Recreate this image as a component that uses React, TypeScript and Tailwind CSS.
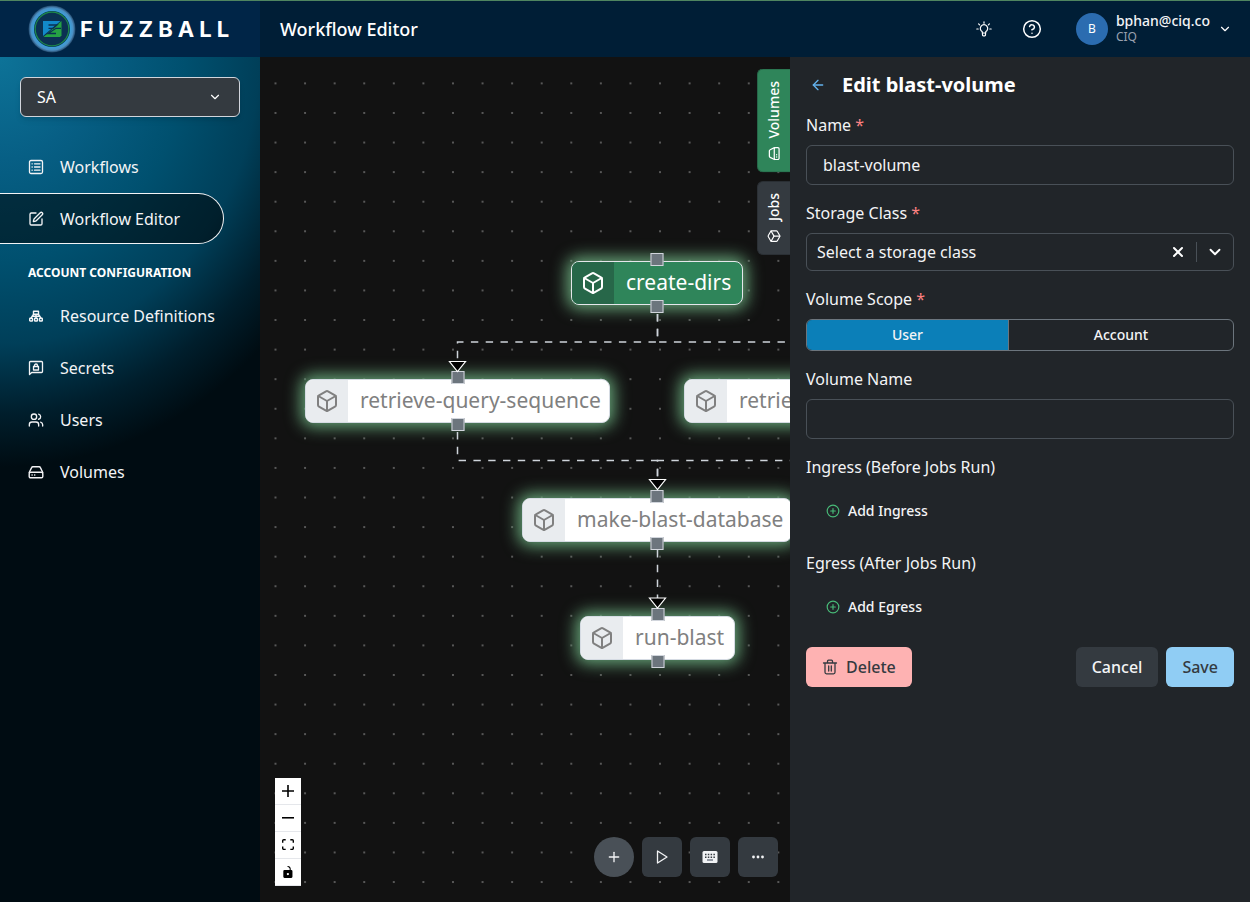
import clsx from 'clsx'
import {
  ArrowLeft,
  Box,
  ChevronDown,
  CircleHelp,
  CirclePlus,
  Play,
  Plus,
  SquarePen,
  Users,
  X,
} from 'lucide-react'
import { useState, type ReactNode, type SVGProps } from 'react'

function Outline({ children, ...props }: SVGProps<SVGSVGElement>) {
  return (
    <svg
      viewBox="0 0 16 16"
      width="16"
      height="16"
      fill="none"
      stroke="currentColor"
      strokeLinecap="round"
      strokeLinejoin="round"
      aria-hidden="true"
      {...props}
    >
      {children}
    </svg>
  )
}

function ListIcon() {
  return (
    <Outline strokeWidth="1.3">
      <rect x="1.5" y="1.5" width="13" height="13" rx="1.5" />
      <path d="M6.5 4.8h5.5M6.5 8h5.5M6.5 11.2h5.5M4 4.8h.3M4 8h.3M4 11.2h.3" />
    </Outline>
  )
}

function ClusterIcon() {
  return (
    <Outline strokeWidth="1.4">
      <rect x="5.5" y="3.2" width="5" height="3" />
      <path d="M5.500 6.400 3.200 9.800M10.500 6.400l2.300 3.400M8 6.400v3.400M4 8.200h8" />
      <rect x="1.700" y="10.200" width="2.800" height="2.800" rx=".6" />
      <rect x="6.600" y="10.200" width="2.800" height="2.800" rx=".6" />
      <rect x="11.500" y="10.200" width="2.800" height="2.800" rx=".6" />
    </Outline>
  )
}

function SecretIcon() {
  return (
    <Outline strokeWidth="1.3">
      <path d="M1.5 14.5v-12a1 1 0 0 1 1-1h11a1 1 0 0 1 1 1v9a1 1 0 0 1-1 1h-9.800z" />
      <rect x="5.500" y="6.500" width="5" height="3.500" />
      <path d="M6.500 6.500v-1a1.500 1.500 0 0 1 3 0v1" />
    </Outline>
  )
}

function DriveIcon(props: SVGProps<SVGSVGElement>) {
  return (
    <Outline strokeWidth="1.4" {...props}>
      <path d="M1.200 8.500 3.600 3.600a1.500 1.500 0 0 1 1.300-.9h6.200a1.500 1.500 0 0 1 1.300.9l2.400 4.900" />
      <rect x="1.200" y="8.300" width="13.600" height="5.500" rx="1.400" />
      <path d="M4 11h.2M6.600 11h.2" />
    </Outline>
  )
}

function BulbIcon() {
  return (
    <Outline strokeWidth="1.2">
      <path d="M6.300 12v-1.300a3.700 3.700 0 1 1 3.400 0V12zM6.500 12v2a.8.8 0 0 0 .8.8h1.400a.8.8 0 0 0 .8-.8v-2M8 .8v1.400M2.600 2.800l1 1M13.400 2.800l-1 1M.8 8h1.400M13.800 8h1.400" />
    </Outline>
  )
}

function TrashIcon() {
  return (
    <Outline strokeWidth="1.3">
      <path d="M1.500 4h13M5.500 4V2.200a1 1 0 0 1 1-1h3a1 1 0 0 1 1 1V4M3 4v9.300a1.500 1.500 0 0 0 1.500 1.500h7a1.500 1.500 0 0 0 1.500-1.500V4M6.700 7v5M9.300 7v5" />
    </Outline>
  )
}

function KeyboardIcon() {
  return (
    <svg viewBox="0 0 16 14" width="16" height="14" aria-hidden="true">
      <rect x=".5" y="1" width="15" height="12" rx="1.500" fill="#f1f3f5" />
      <path
        d="M3 4.500h10M3 7.200h10"
        stroke="#343a40"
        strokeWidth="1.400"
        strokeDasharray="1.500 1.300"
      />
      <path d="M5 10h6" stroke="#6b7280" strokeWidth="1.400" />
    </svg>
  )
}

function LogoMark() {
  return (
    <svg viewBox="0 0 48 48" width="48" height="48" aria-hidden="true">
      <defs>
        <radialGradient id="halo">
          <stop offset=".76" stopColor="#3ba2dc" />
          <stop offset=".9" stopColor="#4a8fc4" />
          <stop offset="1" stopColor="#5a87ae" stopOpacity=".35" />
        </radialGradient>
      </defs>
      <circle cx="24" cy="24" r="23.500" fill="url(#halo)" />
      <circle cx="24" cy="24" r="18" fill="#0b3152" />
      <circle cx="24" cy="24" r="16.800" fill="none" stroke="#1d8a4a" strokeWidth="1.200" />
      <path d="M15 16h17.500L15 31z" fill="#1289c9" />
      <path d="M33.500 16v14.500L32 32H15.500z" fill="#25a244" />
      <path d="M20.500 20h8.500l-4 3.300h-4.500M33 23.300h-5L20 28.500h8" stroke="#0b3152" strokeWidth="1.300" fill="none" />
    </svg>
  )
}

function NavItem({
  icon,
  label,
  active = false,
}: {
  icon: ReactNode
  label: string
  active?: boolean
}) {
  return (
    <a
      href="#"
      aria-current={active ? 'page' : undefined}
      className={clsx(
        'mr-9 flex h-[51px] items-center gap-4 pl-7 text-base text-gray-100',
        active && 'rounded-r-full border border-l-0 border-gray-100 bg-black/50',
      )}
    >
      {icon}
      {label}
    </a>
  )
}

function Sidebar() {
  return (
    <aside className="flex w-[260px] shrink-0 flex-col bg-[#000c12] bg-[radial-gradient(370px_410px_at_0_0,#0d7398_0%,#075f85_25%,#00506f_50%,#003f59_70%,#001e2c_87%,#000c12_100%)] pt-5">
      <div className="mx-5 grid items-center">
        <select
          aria-label="Account"
          className="col-start-1 row-start-1 h-10 appearance-none rounded-md border border-gray-300 bg-[#343a40] px-4 text-base text-white shadow-md"
        >
          <option>SA</option>
        </select>
        <ChevronDown
          size={14}
          className="pointer-events-none col-start-1 row-start-1 mr-[18px] justify-self-end text-white"
        />
      </div>
      <nav className="mt-6 flex flex-col gap-px">
        <NavItem icon={<ListIcon />} label="Workflows" />
        <NavItem icon={<SquarePen size={16} />} label="Workflow Editor" active />
        <h2 className="mb-1 pt-4 pl-7 text-xs leading-6 font-bold text-white">
          ACCOUNT CONFIGURATION
        </h2>
        <NavItem icon={<ClusterIcon />} label="Resource Definitions" />
        <NavItem icon={<SecretIcon />} label="Secrets" />
        <NavItem icon={<Users size={16} />} label="Users" />
        <NavItem icon={<DriveIcon />} label="Volumes" />
      </nav>
    </aside>
  )
}

function Header() {
  return (
    <header className="flex h-[57px] shrink-0 border-t border-[#4f8560] bg-[#001e36] text-white">
      <div className="flex w-[260px] shrink-0 items-center gap-1 bg-[#002547] pl-7">
        <LogoMark />
        <span className="font-['Inter'] text-[22px] font-bold tracking-[5px]">FUZZBALL</span>
      </div>
      <div className="flex flex-1 items-center pr-[18px] pl-5">
        <h1 className="flex-1 text-lg font-medium">Workflow Editor</h1>
        <button aria-label="What's new" className="mr-[30px]">
          <BulbIcon />
        </button>
        <button aria-label="Help" className="mr-[34px]">
          <CircleHelp size={20} strokeWidth={1.8} />
        </button>
        <button className="flex items-center gap-2 text-left">
          <span className="flex size-8 items-center justify-center rounded-full bg-[#2b6cb0] text-xs">
            B
          </span>
          <span className="flex flex-col">
            <span className="text-sm leading-4 font-medium text-gray-100">bphan@ciq.co</span>
            <span className="text-xs leading-4 text-gray-400">CIQ</span>
          </span>
          <ChevronDown size={14} />
        </button>
      </div>
    </header>
  )
}

const nodes = [
  { label: 'create-dirs', box: 'left-[311px] top-[204px] w-[172px]', active: true },
  { label: 'retrieve-query-sequence', box: 'left-[45px] top-[322px] w-[305px]' },
  { label: 'retrieve', box: 'left-[424px] top-[322px] w-[346px]' },
  { label: 'make-blast-database', box: 'left-[262px] top-[441px] w-[270px]' },
  { label: 'run-blast', box: 'left-[320px] top-[559px] w-[155px]' },
]

const edges = [
  'M397.500 257V285H197.500V305',
  'M397.500 257V285H597.500V305',
  'M197.500 375V403.500H397.500V423',
  'M597.500 375V403.500H397.500V423',
  'M397.500 493V542',
]

const arrows = [
  'M189.500 304.500h16l-8 10z',
  'M389.500 422.500h16l-8 10z',
  'M389.500 541h16l-8 10z',
]

function Handle({ side }: { side: 'top' | 'bottom' }) {
  return (
    <span
      className={clsx(
        'absolute left-1/2 size-[13px] -translate-x-1/2 border border-gray-300 bg-[#6c757d]',
        side === 'top' ? '-top-[9px]' : '-bottom-[9px]',
      )}
    />
  )
}

function JobNode({ label, box, active }: { label: string; box: string; active?: boolean }) {
  return (
    <div
      className={clsx(
        'absolute flex h-11 rounded-lg border text-[21px] whitespace-nowrap shadow-[0_0_16px_4px_#68a67a]',
        box,
        active
          ? 'border-gray-200 bg-[#2f855a] text-white'
          : 'border-[#d5dbe3] bg-white text-[#808080]',
      )}
    >
      <span
        className={clsx(
          'flex w-[42px] shrink-0 items-center justify-center rounded-l-[7px]',
          active ? 'bg-[#276749]' : 'bg-[#e9ecef]',
        )}
      >
        <Box size={24} />
      </span>
      <span className="flex items-center pl-3">{label}</span>
      <Handle side="top" />
      <Handle side="bottom" />
    </div>
  )
}

function PanelTab({
  icon,
  label,
  active = false,
}: {
  icon: ReactNode
  label: string
  active?: boolean
}) {
  return (
    <button
      className={clsx(
        'flex w-[33px] rotate-180 items-center justify-center gap-2 rounded-r-md border border-l-0 px-[11px] text-sm font-medium text-white [writing-mode:vertical-rl]',
        active ? 'border-[#276749] bg-[#2f855a]' : 'border-[#2b3035] bg-[#343a40]',
      )}
    >
      {icon}
      {label}
    </button>
  )
}

function ControlButton({
  label,
  viewBox,
  path,
}: {
  label: string
  viewBox: string
  path: string
}) {
  return (
    <button
      aria-label={label}
      className="flex h-[27px] w-[26px] items-center justify-center border-b border-gray-200 bg-white"
    >
      <svg viewBox={viewBox} className="max-h-3 w-3" aria-hidden="true">
        <path d={path} />
      </svg>
    </button>
  )
}

function Canvas() {
  return (
    <main className="relative flex-1 overflow-hidden bg-[#121212]">
      <svg className="absolute inset-0 size-full" aria-hidden="true">
        <pattern id="dots" x="14.500" y="25.400" width="29.580" height="29.580" patternUnits="userSpaceOnUse">
          <circle cx="1" cy="1" r=".9" fill="#777" />
        </pattern>
        <rect width="100%" height="100%" fill="url(#dots)" />
      </svg>
      {nodes.map((node) => (
        <JobNode key={node.label} label={node.label} box={node.box} active={node.active} />
      ))}
      <svg className="pointer-events-none absolute inset-0 size-full" aria-hidden="true">
        {edges.map((d) => (
          <path key={d} d={d} fill="none" stroke="#ced4da" strokeWidth="1.500" strokeDasharray="7.400" />
        ))}
        {arrows.map((d) => (
          <path key={d} d={d} fill="#000" stroke="#fff" strokeWidth="1.200" />
        ))}
      </svg>

      <div className="absolute top-3 right-0 flex flex-col gap-2">
        <PanelTab icon={<DriveIcon width={14} height={14} className="rotate-90" />} label="Volumes" active />
        <PanelTab icon={<Box size={14} className="rotate-90" />} label="Jobs" />
      </div>

      <div className="absolute bottom-4 left-[15px] flex flex-col">
        <ControlButton
          label="Zoom in"
          viewBox="0 0 32 32"
          path="M32 18.133H18.133V32h-4.266V18.133H0v-4.266h13.867V0h4.266v13.867H32z"
        />
        <ControlButton label="Zoom out" viewBox="0 0 32 5" path="M0 0h32v4.200H0z" />
        <ControlButton
          label="Fit view"
          viewBox="0 0 32 30"
          path="M3.692 4.630c0-.53.4-.938.939-.938h5.215V0H4.708C2.130 0 0 2.054 0 4.630v5.216h3.692V4.631zM27.354 0h-5.200v3.692h5.170c.53 0 .984.4.984.939v5.215H32V4.631A4.624 4.624 0 0027.354 0zm.954 24.830c0 .532-.4.940-.939.940h-5.215v3.768h5.215c2.577 0 4.631-2.130 4.631-4.707v-5.139h-3.692v5.139zm-23.677.940c-.531 0-.939-.4-.939-.940v-5.138H0v5.139c0 2.577 2.130 4.707 4.708 4.707h5.138V25.770H4.631z"
        />
        <ControlButton
          label="Toggle interactivity"
          viewBox="0 0 25 32"
          path="M21.333 10.667H19.810V7.619C19.810 3.429 16.380 0 12.190 0c-4.114 1.828-1.370 2.133.305 2.438 1.676.305 4.420 2.590 4.420 5.181v3.048H3.047A3.056 3.056 0 000 13.714v15.238A3.056 3.056 0 003.048 32h18.285a3.056 3.056 0 003.048-3.048V13.714a3.056 3.056 0 00-3.048-3.047zM12.190 24.533a3.056 3.056 0 01-3.047-3.047 3.056 3.056 0 013.047-3.048 3.056 3.056 0 013.048 3.048 3.056 3.056 0 01-3.048 3.047z"
        />
      </div>

      <div className="absolute right-3 bottom-[25px] flex gap-2 text-gray-100">
        <button
          aria-label="Add job"
          className="flex size-10 items-center justify-center rounded-full bg-[#495057]"
        >
          <Plus size={16} />
        </button>
        <button
          aria-label="Run workflow"
          className="flex size-10 items-center justify-center rounded-md bg-[#343a40]"
        >
          <Outline strokeWidth="1.3">
            <path d="M3.500 2v12l9.500-6z" />
          </Outline>
        </button>
        <button
          aria-label="Keyboard shortcuts"
          className="flex size-10 items-center justify-center rounded-md bg-[#343a40]"
        >
          <KeyboardIcon />
        </button>
        <button
          aria-label="More"
          className="flex size-10 items-center justify-center rounded-md bg-[#343a40]"
        >
          <svg viewBox="0 0 16 16" width="16" height="16" fill="currentColor" aria-hidden="true">
            <circle cx="3.500" cy="8" r="1.400" />
            <circle cx="8" cy="8" r="1.400" />
            <circle cx="12.500" cy="8" r="1.400" />
          </svg>
        </button>
      </div>
    </main>
  )
}

function Required() {
  return <span className="text-[#fc8181]">*</span>
}

function VolumePanel() {
  const [name, setName] = useState('blast-volume')
  const [volumeName, setVolumeName] = useState('')
  const [scope, setScope] = useState('User')

  return (
    <form
      onSubmit={(e) => e.preventDefault()}
      className="flex w-[460px] shrink-0 flex-col gap-4 bg-[#212529] px-4 pt-3 text-base text-gray-100"
    >
      <div className="-mb-1 flex h-8 items-center gap-4">
        <button type="button" aria-label="Back" className="ml-1 text-[#63b3ed]">
          <ArrowLeft size={16} />
        </button>
        <h2 className="text-xl font-bold text-white">Edit blast-volume</h2>
      </div>

      <div className="flex flex-col gap-2">
        <label htmlFor="name">
          Name <Required />
        </label>
        <input
          id="name"
          value={name}
          onChange={(e) => setName(e.target.value)}
          className="h-10 rounded-md border border-[#495057] px-4"
        />
      </div>

      <div className="flex flex-col gap-2">
        <label htmlFor="storage-class">
          Storage Class <Required />
        </label>
        <div className="flex h-[38px] items-center rounded-md border border-[#495057]">
          <select id="storage-class" className="flex-1 appearance-none px-[10px]">
            <option>Select a storage class</option>
          </select>
          <button type="button" aria-label="Clear" className="px-[10px] text-white">
            <X size={16} strokeWidth={3} />
          </button>
          <span className="h-5 w-px bg-[#495057]" />
          <ChevronDown size={18} strokeWidth={2.5} className="mx-[9px] text-white" />
        </div>
      </div>

      <div className="flex flex-col gap-2">
        <span id="scope">
          Volume Scope <Required />
        </span>
        <div
          role="group"
          aria-labelledby="scope"
          className="flex h-8 divide-x divide-[#6c757d] overflow-hidden rounded-md border border-[#6c757d] text-sm font-medium"
        >
          {['User', 'Account'].map((item) => (
            <button
              key={item}
              type="button"
              aria-pressed={scope === item}
              onClick={() => setScope(item)}
              className={clsx('flex-auto', scope === item && 'bg-[#0b7fb8]')}
            >
              {item}
            </button>
          ))}
        </div>
      </div>

      <div className="flex flex-col gap-2">
        <label htmlFor="volume-name">Volume Name</label>
        <input
          id="volume-name"
          value={volumeName}
          onChange={(e) => setVolumeName(e.target.value)}
          className="h-10 rounded-md border border-[#495057] px-4"
        />
      </div>

      <div className="flex flex-col items-start gap-2">
        <span>Ingress (Before Jobs Run)</span>
        <button type="button" className="ml-5 flex h-12 items-center gap-2 text-sm font-medium">
          <CirclePlus size={14} className="text-[#48bb78]" />
          Add Ingress
        </button>
      </div>

      <div className="flex flex-col items-start gap-2">
        <span>Egress (After Jobs Run)</span>
        <button type="button" className="ml-5 flex h-12 items-center gap-2 text-sm font-medium">
          <CirclePlus size={14} className="text-[#48bb78]" />
          Add Egress
        </button>
      </div>

      <div className="flex h-10 gap-2 font-medium">
        <button
          type="button"
          className="mr-auto flex items-center gap-2 rounded-md bg-[#feb2b2] px-4 text-[#343a40]"
        >
          <TrashIcon />
          Delete
        </button>
        <button type="button" className="rounded-md bg-[#343a40] px-4">
          Cancel
        </button>
        <button type="submit" className="rounded-md bg-[#90cdf4] px-4 text-[#343a40]">
          Save
        </button>
      </div>
    </form>
  )
}

export default function App() {
  return (
    <div className="flex min-h-screen flex-col bg-[#121212] font-['Noto_Sans',sans-serif]">
      <Header />
      <div className="flex flex-1">
        <Sidebar />
        <Canvas />
        <VolumePanel />
      </div>
    </div>
  )
}
